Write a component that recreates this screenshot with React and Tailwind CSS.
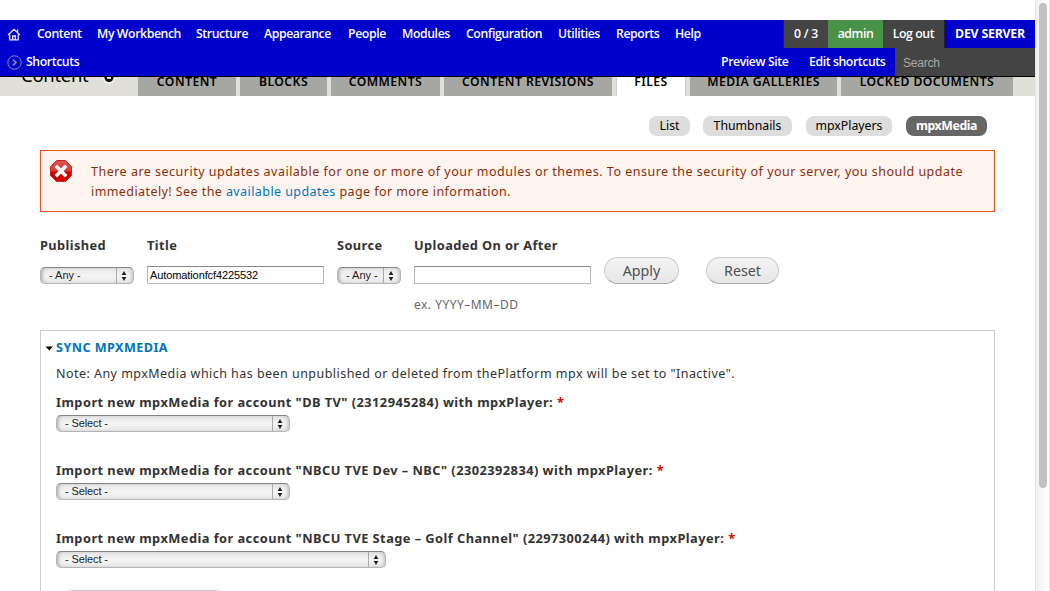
const menu = [
  ["Content", "w-[60px]"],
  ["My Workbench", "w-[99px]"],
  ["Structure", "w-[68px]"],
  ["Appearance", "w-[84px]"],
  ["People", "w-[54px]"],
  ["Modules", "w-[64px]"],
  ["Configuration", "w-[92px]"],
  ["Utilities", "w-[58px]"],
  ["Reports", "w-[59px]"],
  ["Help", "w-[109px]"],
];

const tabs = [
  ["Content", "w-[98px]"],
  ["Blocks", "w-[87px]"],
  ["Comments", "w-[109px]"],
  ["Content revisions", "w-[168px]"],
  ["Files", "w-[70px] bg-white! border-x border-[#ccc]"],
  ["Media galleries", "w-[147px]"],
  ["Locked documents", "w-[172px]"],
];

const lucida = "font-['Noto_Sans',sans-serif]";

function Toolbar() {
  return (
    <header className="h-[57px] shrink-0 border-b border-black bg-[#0000cc] font-['Open_Sans',sans-serif] text-[12.3px] font-semibold leading-7 tracking-[-0.42px] text-white">
      <div className="flex h-7">
        <div className="flex w-[37px] items-center pl-[7px]">
          <svg width="14" height="13" viewBox="0 0 14 13" fill="none" stroke="#e8e8ff" strokeWidth="1.3">
            <path d="M1 7 L7 1.3 L13 7 M10.5 4.2 V1.5 M2.8 6.5 V11.8 H11.2 V6.5 M5.7 11.5 V8 H8.3 V11.5" />
          </svg>
        </div>
        {menu.map(([label, size]) => (
          <a key={label} className={`${size} shrink-0 whitespace-nowrap`}>{label}</a>
        ))}
        <div className="-ml-px w-[45px] border-l border-[#222] bg-[#444] text-center tracking-[-0.2px]">0 / 3</div>
        <div className="w-[55px] bg-[#4b9249] text-center">admin</div>
        <div className="w-[62px] border-r border-[#222] bg-[#444] text-center">Log out</div>
        <div className="w-[90px] whitespace-nowrap text-center font-bold tracking-[-0.2px]">DEV SERVER</div>
      </div>
      <div className="flex h-7">
        <div className="flex w-[26px] items-center pl-[7px]">
          <svg width="15" height="15" viewBox="0 0 15 15" fill="none" stroke="#8888a8">
            <circle cx="7.5" cy="7.5" r="6.7" />
            <path d="M6 4.7 L9 7.5 L6 10.3" strokeWidth="1.7" />
          </svg>
        </div>
        <div className="w-[695px]">Shortcuts</div>
        <div className="w-[88px] whitespace-nowrap">Preview Site</div>
        <div className="w-[86px] whitespace-nowrap">Edit shortcuts</div>
        <div className="flex-1 bg-[#444] pl-2 pt-px font-['Liberation_Sans',sans-serif] text-[12px] font-normal tracking-[-0.2px] text-[#aaa]">Search</div>
      </div>
    </header>
  );
}

function Tabs() {
  return (
    <div className={`flex h-[19px] shrink-0 overflow-hidden bg-[#e0e0d8] ${lucida}`}>
      <div className="flex w-[138px] shrink-0 pl-[21px]">
        <h1 className="-mt-4 w-[82px] text-[18.5px] leading-7 tracking-[-0.3px] text-black">Content</h1>
        <svg width="12" height="7" viewBox="0 0 12 7">
          <path d="M0.5 0 V1 Q1 6.5 6 6.5 Q11 6.5 11.5 1 V0 Z" fill="#fff" />
          <path d="M1.2 0 Q2 5.2 6 5.2 Q10 5.2 10.8 0 H8 V1.8 H4 V0 Z" fill="#111" />
        </svg>
      </div>
      <nav className="flex gap-1">
        {tabs.map(([label, size]) => (
          <a key={label} className={`${size} h-[19px] shrink-0 whitespace-nowrap bg-[#a6a7a2] text-center text-[12.2px] font-semibold uppercase leading-[10px] tracking-[0.45px] text-black`}>{label}</a>
        ))}
      </nav>
    </div>
  );
}

function Select({ label, size }) {
  return (
    <div className={`${size} flex h-[17px] items-stretch overflow-hidden rounded-[5px] border border-[#b5b5b5] border-t-[#858585] bg-linear-to-b from-[#e4e4e4] via-[#f4f4f4] to-[#e8e8e8] font-['Liberation_Sans',sans-serif] text-[11px] leading-[15px] text-[#222] shadow-[inset_3px_0_3px_-1px_#bbb,inset_-3px_0_3px_-1px_#ccc]`}>
      <span className="flex-1 whitespace-nowrap pl-2">{label}</span>
      <span className="flex w-[17px] items-center justify-center border-l border-[#aaa] pr-0.5">
        <svg width="6" height="10" viewBox="0 0 6 10" fill="#222">
          <path d="M3 0 L5.4 4 H0.6 Z M3 10 L0.6 6 H5.4 Z" />
        </svg>
      </span>
    </div>
  );
}

function Input({ value }) {
  return (
    <div className="h-[18px] w-[177px] border border-[#bbb] border-t-[#888] bg-white pl-0.5 font-['Liberation_Sans',sans-serif] text-[11px] leading-4 tracking-[-0.1px] text-black">{value}</div>
  );
}

function Field({ label, size, pad, children }) {
  return (
    <div className={`${size} shrink-0`}>
      <div className="h-5 whitespace-nowrap text-[12.8px] font-bold leading-[21px] tracking-[0.4px]">{label}</div>
      <div className={pad}>{children}</div>
    </div>
  );
}

function Pill({ label, size }) {
  return (
    <button className={`${size} h-[27px] rounded-full border border-[#ccc] border-b-[#aaa] bg-linear-to-b from-[#f3f3f3] to-[#e6e6e6] text-center text-[14.3px] leading-[25px] text-[#4f4f4f]`}>{label}</button>
  );
}

const imports = [
  ['Import new mpxMedia for account "DB TV" (2312945284) with mpxPlayer:', "w-[234px]"],
  ['Import new mpxMedia for account "NBCU TVE Dev – NBC" (2302392834) with mpxPlayer:', "w-[234px]"],
  ['Import new mpxMedia for account "NBCU TVE Stage – Golf Channel" (2297300244) with mpxPlayer:', "w-[330px]"],
];

export default function App() {
  return (
    <div className="flex h-[591px] w-[1050px] overflow-hidden bg-white">
      <div className="flex w-[1035px] shrink-0 flex-col overflow-hidden pt-5">
        <Toolbar />
        <Tabs />
        <main className={`${lucida} pl-10 text-[#333]`}>
          <div className="flex h-[54px] justify-end pr-12 pt-5 text-[12.3px] leading-[19px] text-black">
            <a className="mr-[13px] h-5 w-[41px] rounded-[8px] bg-[#ddd] text-center">List</a>
            <a className="mr-3.5 h-5 w-[89px] rounded-[8px] bg-[#ddd] text-center">Thumbnails</a>
            <a className="mr-3.5 h-5 w-[86px] rounded-[8px] bg-[#ddd] text-center">mpxPlayers</a>
            <a className="h-5 w-[81px] rounded-[8px] bg-[#666] text-center font-bold tracking-[-0.4px] text-white">mpxMedia</a>
          </div>

          <div className="flex h-[62px] w-[955px] border border-[#ed541d] bg-[#fef5f1] pl-[9px] pt-[9px]">
            <svg className="mr-[19px] shrink-0" width="22" height="22" viewBox="0 0 22 22">
              <defs>
                <linearGradient id="stop" x2="0" y2="1">
                  <stop stopColor="#df5050" />
                  <stop offset="0.48" stopColor="#d93a3a" />
                  <stop offset="0.55" stopColor="#cc0000" />
                  <stop offset="1" stopColor="#d80000" />
                </linearGradient>
              </defs>
              <path d="M6.5 0.5 H15.5 L21.5 6.5 V15.5 L15.5 21.5 H6.5 L0.5 15.5 V6.5 Z" fill="url(#stop)" stroke="#c62828" />
              <path d="M5.8 5.8 L16.2 16.2 M16.2 5.8 L5.8 16.2" stroke="#fff" strokeWidth="3.6" />
            </svg>
            <p className="whitespace-nowrap pt-0.5 text-[12.5px] leading-5 tracking-[0.42px] text-[#8c2e0b]">
              <span className="tracking-[0.49px]">There are security updates available for one or more of your modules or themes. To ensure the security of your server, you should update</span><br />
              immediately! See the <a className="text-[#0074bd]">available updates</a> page for more information.
            </p>
          </div>

          <div className="flex h-[118px] pt-[23px]">
            <Field label="Published" size="w-[107px]" pad="pt-3"><Select label="- Any -" size="w-[94px]" /></Field>
            <Field label="Title" size="w-[190px]" pad="pt-[11px]"><Input value="Automationfcf4225532" /></Field>
            <Field label="Source" size="w-[77px]" pad="pt-3"><Select label="- Any -" size="w-[64px]" /></Field>
            <Field label="Uploaded On or After" size="w-[190px]" pad="pt-[11px]">
              <Input value="" />
              <div className="pt-[11px] text-[12px] leading-5 tracking-[0.48px] text-[#666]">ex. YYYY–MM–DD</div>
            </Field>
            <div className="flex gap-[27px] pt-[22px]">
              <Pill label="Apply" size="w-[75px]" />
              <Pill label="Reset" size="w-[73px]" />
            </div>
          </div>

          <section className="h-[320px] w-[955px] border border-[#ccc] pl-[15px] pt-[7px] text-[12.5px] leading-5 tracking-[0.46px]">
            <h2 className="-ml-[11px] flex items-center text-[12.6px] font-bold tracking-[0.45px] text-[#0074bd]">
              <svg className="mr-[3px]" width="8" height="5" viewBox="0 0 8 5"><path d="M0.5 0.5 H8 L4.2 4.5 Z" fill="#000" /></svg>
              SYNC MPXMEDIA
            </h2>
            <p className="mt-1.5 whitespace-nowrap">Note: Any mpxMedia which has been unpublished or deleted from thePlatform mpx will be set to "Inactive".</p>
            <div className="pt-[9px]">
              {imports.map(([label, size]) => (
                <div key={label} className="h-[68px]">
                  <div className="mb-1 whitespace-nowrap text-[12.8px] font-bold leading-[18px] tracking-[0.46px]">{label} <span className="text-[#e00]">*</span></div>
                  <div className="tracking-[-0.12px]"><Select label="- Select -" size={size} /></div>
                </div>
              ))}
            </div>
            <div className="-mt-[7px] ml-0.5 h-[27px] w-[172px] rounded-full border border-[#ccc] bg-[#f2f2f2]" />
          </section>
        </main>
      </div>
      <div className="w-[15px] border-x border-[#e4e4e4] bg-linear-to-r from-[#f1f1f1] to-white pl-[3px] pt-[3px]">
        <div className="h-[485px] w-2 rounded-full bg-[#c1c1c1]" />
      </div>
    </div>
  );
}
